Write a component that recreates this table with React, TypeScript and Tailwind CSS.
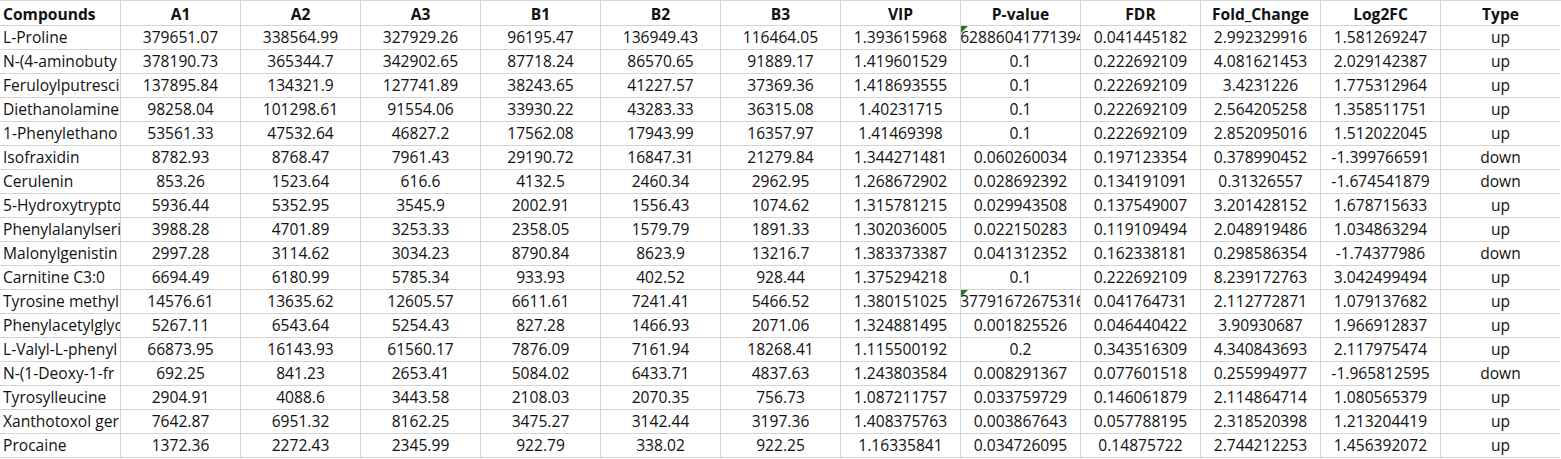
const HEADERS = [
  "Compounds",
  "A1",
  "A2",
  "A3",
  "B1",
  "B2",
  "B3",
  "VIP",
  "P-value",
  "FDR",
  "Fold_Change",
  "Log2FC",
  "Type",
];

// P-value cells flagged as "number stored as text" get the green corner mark
type Row = { cells: string[]; flagged?: boolean };

const ROWS: Row[] = [
  { cells: ["L-Proline", "379651.07", "338564.99", "327929.26", "96195.47", "136949.43", "116464.05", "1.393615968", "0.0062886041771394521", "0.041445182", "2.992329916", "1.581269247", "up"], flagged: true },
  { cells: ["N-(4-aminobuty", "378190.73", "365344.7", "342902.65", "87718.24", "86570.65", "91889.17", "1.419601529", "0.1", "0.222692109", "4.081621453", "2.029142387", "up"] },
  { cells: ["Feruloylputresci", "137895.84", "134321.9", "127741.89", "38243.65", "41227.57", "37369.36", "1.418693555", "0.1", "0.222692109", "3.4231226", "1.775312964", "up"] },
  { cells: ["Diethanolamine", "98258.04", "101298.61", "91554.06", "33930.22", "43283.33", "36315.08", "1.40231715", "0.1", "0.222692109", "2.564205258", "1.358511751", "up"] },
  { cells: ["1-Phenylethano", "53561.33", "47532.64", "46827.2", "17562.08", "17943.99", "16357.97", "1.41469398", "0.1", "0.222692109", "2.852095016", "1.512022045", "up"] },
  { cells: ["Isofraxidin", "8782.93", "8768.47", "7961.43", "29190.72", "16847.31", "21279.84", "1.344271481", "0.060260034", "0.197123354", "0.378990452", "-1.399766591", "down"] },
  { cells: ["Cerulenin", "853.26", "1523.64", "616.6", "4132.5", "2460.34", "2962.95", "1.268672902", "0.028692392", "0.134191091", "0.31326557", "-1.674541879", "down"] },
  { cells: ["5-Hydroxytrypto", "5936.44", "5352.95", "3545.9", "2002.91", "1556.43", "1074.62", "1.315781215", "0.029943508", "0.137549007", "3.201428152", "1.678715633", "up"] },
  { cells: ["Phenylalanylseri", "3988.28", "4701.89", "3253.33", "2358.05", "1579.79", "1891.33", "1.302036005", "0.022150283", "0.119109494", "2.048919486", "1.034863294", "up"] },
  { cells: ["Malonylgenistin", "2997.28", "3114.62", "3034.23", "8790.84", "8623.9", "13216.7", "1.383373387", "0.041312352", "0.162338181", "0.298586354", "-1.74377986", "down"] },
  { cells: ["Carnitine C3:0", "6694.49", "6180.99", "5785.34", "933.93", "402.52", "928.44", "1.375294218", "0.1", "0.222692109", "8.239172763", "3.042499494", "up"] },
  { cells: ["Tyrosine methyl", "14576.61", "13635.62", "12605.57", "6611.61", "7241.41", "5466.52", "1.380151025", "0.0037791672675316609", "0.041764731", "2.112772871", "1.079137682", "up"], flagged: true },
  { cells: ["Phenylacetylglyc", "5267.11", "6543.64", "5254.43", "827.28", "1466.93", "2071.06", "1.324881495", "0.001825526", "0.046440422", "3.90930687", "1.966912837", "up"] },
  { cells: ["L-Valyl-L-phenyl", "66873.95", "16143.93", "61560.17", "7876.09", "7161.94", "18268.41", "1.115500192", "0.2", "0.343516309", "4.340843693", "2.117975474", "up"] },
  { cells: ["N-(1-Deoxy-1-fr", "692.25", "841.23", "2653.41", "5084.02", "6433.71", "4837.63", "1.243803584", "0.008291367", "0.077601518", "0.255994977", "-1.965812595", "down"] },
  { cells: ["Tyrosylleucine", "2904.91", "4088.6", "3443.58", "2108.03", "2070.35", "756.73", "1.087211757", "0.033759729", "0.146061879", "2.114864714", "1.080565379", "up"] },
  { cells: ["Xanthotoxol ger", "7642.87", "6951.32", "8162.25", "3475.27", "3142.44", "3197.36", "1.408375763", "0.003867643", "0.057788195", "2.318520398", "1.213204419", "up"] },
  { cells: ["Procaine", "1372.36", "2272.43", "2345.99", "922.79", "338.02", "922.25", "1.16335841", "0.034726095", "0.14875722", "2.744212253", "1.456392072", "up"] },
];

function Cell({ text, col, bold, flagged }: { text: string; col: number; bold?: boolean; flagged?: boolean }) {
  return (
    <div
      className={`relative flex items-end overflow-hidden border-b border-[#d4d4d4] ${
        col === 0 ? "justify-start pl-[3px]" : "justify-center border-l"
      } ${bold ? "pb-[1px] font-bold" : "pb-[2px]"}`}
    >
      {flagged && (
        <span className="absolute left-0 top-0 z-10 h-0 w-0 border-r-[7px] border-t-[7px] border-r-transparent border-t-[#1d7a33]" />
      )}
      {col === 0 ? (
        <span className="block min-w-0 overflow-hidden whitespace-nowrap leading-[20px]">{text}</span>
      ) : (
        <span className="flex min-w-0 max-w-full justify-center overflow-hidden">
          <span className="shrink-0 whitespace-nowrap leading-[20px]">{text}</span>
        </span>
      )}
    </div>
  );
}

export default function App() {
  return (
    <div className="h-[459px] w-[1561px] overflow-hidden bg-white font-['Open_Sans',sans-serif] text-[15.6px] text-[#111]">
      <div className="grid grid-cols-[repeat(13,120px)] grid-rows-[25px_repeat(18,24px)] border-t border-[#d4d4d4]">
        {HEADERS.map((h, i) => (
          <Cell key={h} text={h} col={i} bold />
        ))}
        {ROWS.map((r, ri) =>
          r.cells.map((c, ci) => (
            <Cell key={`${ri}-${ci}`} text={c} col={ci} flagged={r.flagged && ci === 8} />
          ))
        )}
      </div>
    </div>
  );
}
